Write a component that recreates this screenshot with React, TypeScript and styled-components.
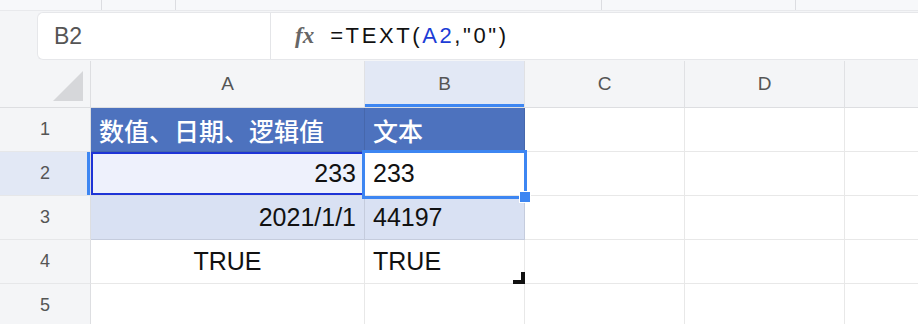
import styled, { createGlobalStyle } from 'styled-components';

const GlobalStyle = createGlobalStyle`
  html, body {
    margin: 0;
    padding: 0;
    background: #ffffff;
    overflow: hidden;
  }
  body {
    font-family: 'Liberation Sans', 'Noto Sans CJK SC', sans-serif;
  }
`;

const Page = styled.div`
  width: 918px;
  height: 324px;
  overflow: hidden;
  background: #f4f5f7;
`;

const ToolStrip = styled.div`
  display: flex;
  height: 10px;
  background: #f7f8fa;
  border-bottom: 1px solid #e8e9ec;
`;

const ToolSlot = styled.div<{ $w?: number }>`
  flex: ${({ $w }) => ($w ? `0 0 ${$w}px` : '1')};
  box-sizing: border-box;
  border-right: ${({ $w }) => ($w ? '1px solid #dcdde1' : 'none')};
`;

const FormulaBar = styled.div`
  display: flex;
  height: 50px;
  box-sizing: border-box;
  padding: 1px 0 1px 37px;
`;

const FormulaBox = styled.div`
  flex: 1;
  display: flex;
  align-items: center;
  background: #ffffff;
  border: 1px solid #e6e7ea;
  border-right: none;
  border-radius: 6px 0 0 6px;
`;

const NameBox = styled.div`
  width: 233px;
  height: 100%;
  box-sizing: border-box;
  display: flex;
  align-items: center;
  padding-left: 16px;
  border-right: 1px solid #e4e5e8;
  font-size: 23px;
  color: #555555;
`;

const FxMark = styled.span`
  margin-left: 24px;
  font-family: 'Liberation Serif', serif;
  font-style: italic;
  font-weight: 700;
  font-size: 23px;
  color: #666666;
`;

const FormulaText = styled.span`
  margin-left: 16px;
  font-size: 22px;
  letter-spacing: 2.6px;
  color: #111111;
`;

const RefText = styled.span`
  color: #1c3cd6;
`;

const Grid = styled.div`
  display: grid;
  width: max-content;
  grid-template-columns: 91px 274px 160px 160px 160px 160px;
  grid-template-rows: 47px;
  grid-auto-rows: 44px;
  background: #ffffff;
`;

const CornerCell = styled.div`
  display: flex;
  align-items: flex-end;
  justify-content: flex-end;
  padding: 0 7px 6px 0;
  background: #f4f5f7;
  border-right: 1px solid #dddee1;
  border-bottom: 1px solid #dddee1;
`;

const CornerTriangle = styled.div`
  width: 30px;
  height: 30px;
  background: #d6d7da;
  clip-path: polygon(100% 0, 100% 100%, 0 100%);
`;

const ColHeader = styled.div<{ $active?: boolean }>`
  display: flex;
  align-items: center;
  justify-content: center;
  font-size: 19px;
  color: #555555;
  background: ${({ $active }) => ($active ? '#e2e8f5' : '#f4f5f7')};
  border-right: 1px solid #e0e1e4;
  border-bottom: 1px solid #dddee1;
  box-shadow: ${({ $active }) => ($active ? 'inset 0 -3px 0 #3d86f2' : 'none')};
`;

const RowHeader = styled.div<{ $active?: boolean }>`
  display: flex;
  align-items: center;
  justify-content: center;
  font-size: 18px;
  color: #555555;
  background: ${({ $active }) => ($active ? '#e2e8f5' : '#f4f5f7')};
  border-right: 1px solid #dddee1;
  border-bottom: 1px solid #e6e7e9;
  box-shadow: ${({ $active }) => ($active ? 'inset -3px 0 0 #3d86f2' : 'none')};
`;

const Cell = styled.div<{
  $align?: 'left' | 'right' | 'center';
  $bg?: string;
  $color?: string;
  $ref?: boolean;
}>`
  position: relative;
  display: flex;
  align-items: center;
  justify-content: ${({ $align }) =>
    $align === 'right' ? 'flex-end' : $align === 'center' ? 'center' : 'flex-start'};
  padding: 0 8px;
  font-size: 25px;
  white-space: nowrap;
  color: ${({ $color }) => $color || '#111111'};
  background: ${({ $bg }) => $bg || '#ffffff'};
  border-right: 1px solid rgba(0, 0, 0, 0.09);
  border-bottom: 1px solid rgba(0, 0, 0, 0.09);
  box-shadow: ${({ $ref }) => ($ref ? 'inset 0 0 0 2px #1e34d6' : 'none')};
`;

const HeadText = styled.span`
  font-weight: 500;
`;

const ActiveFrame = styled.div`
  position: absolute;
  left: -3px;
  top: -2px;
  width: 165px;
  height: 49px;
  box-sizing: border-box;
  border: 3px solid #3d86f2;
  z-index: 2;
  pointer-events: none;
`;

const FillHandle = styled.div`
  position: absolute;
  right: -7px;
  bottom: -8px;
  width: 10px;
  height: 10px;
  background: #3d86f2;
  border: 1px solid #ffffff;
  box-sizing: content-box;
  z-index: 3;
`;

const RangeEnd = styled.div`
  position: absolute;
  right: -1px;
  bottom: -1px;
  width: 12px;
  height: 12px;
  box-sizing: border-box;
  border-right: 4px solid #111111;
  border-bottom: 4px solid #111111;
  z-index: 2;
`;

const HEAD_BLUE = '#4d72be';
const LIGHT_BLUE = '#d9e1f3';

export default function App() {
  return (
    <Page>
      <GlobalStyle />
      <ToolStrip>
        <ToolSlot $w={102} />
        <ToolSlot $w={74} />
        <ToolSlot $w={426} />
        <ToolSlot $w={194} />
        <ToolSlot />
      </ToolStrip>
      <FormulaBar>
        <FormulaBox>
          <NameBox>B2</NameBox>
          <FxMark>fx</FxMark>
          <FormulaText>
            =TEXT(<RefText>A2</RefText>,"0")
          </FormulaText>
        </FormulaBox>
      </FormulaBar>
      <Grid>
        <CornerCell>
          <CornerTriangle />
        </CornerCell>
        <ColHeader>A</ColHeader>
        <ColHeader $active>B</ColHeader>
        <ColHeader>C</ColHeader>
        <ColHeader>D</ColHeader>
        <ColHeader />

        <RowHeader>1</RowHeader>
        <Cell $bg={HEAD_BLUE} $color="#ffffff">
          <HeadText>数值、日期、逻辑值</HeadText>
        </Cell>
        <Cell $bg={HEAD_BLUE} $color="#ffffff">
          <HeadText>文本</HeadText>
        </Cell>
        <Cell />
        <Cell />
        <Cell />

        <RowHeader $active>2</RowHeader>
        <Cell $align="right" $bg="#eef1fc" $ref>233</Cell>
        <Cell>
          233
          <ActiveFrame />
          <FillHandle />
        </Cell>
        <Cell />
        <Cell />
        <Cell />

        <RowHeader>3</RowHeader>
        <Cell $align="right" $bg={LIGHT_BLUE}>2021/1/1</Cell>
        <Cell $bg={LIGHT_BLUE}>44197</Cell>
        <Cell />
        <Cell />
        <Cell />

        <RowHeader>4</RowHeader>
        <Cell $align="center">TRUE</Cell>
        <Cell>
          TRUE
          <RangeEnd />
        </Cell>
        <Cell />
        <Cell />
        <Cell />

        <RowHeader>5</RowHeader>
        <Cell />
        <Cell />
        <Cell />
        <Cell />
        <Cell />
      </Grid>
    </Page>
  );
}
